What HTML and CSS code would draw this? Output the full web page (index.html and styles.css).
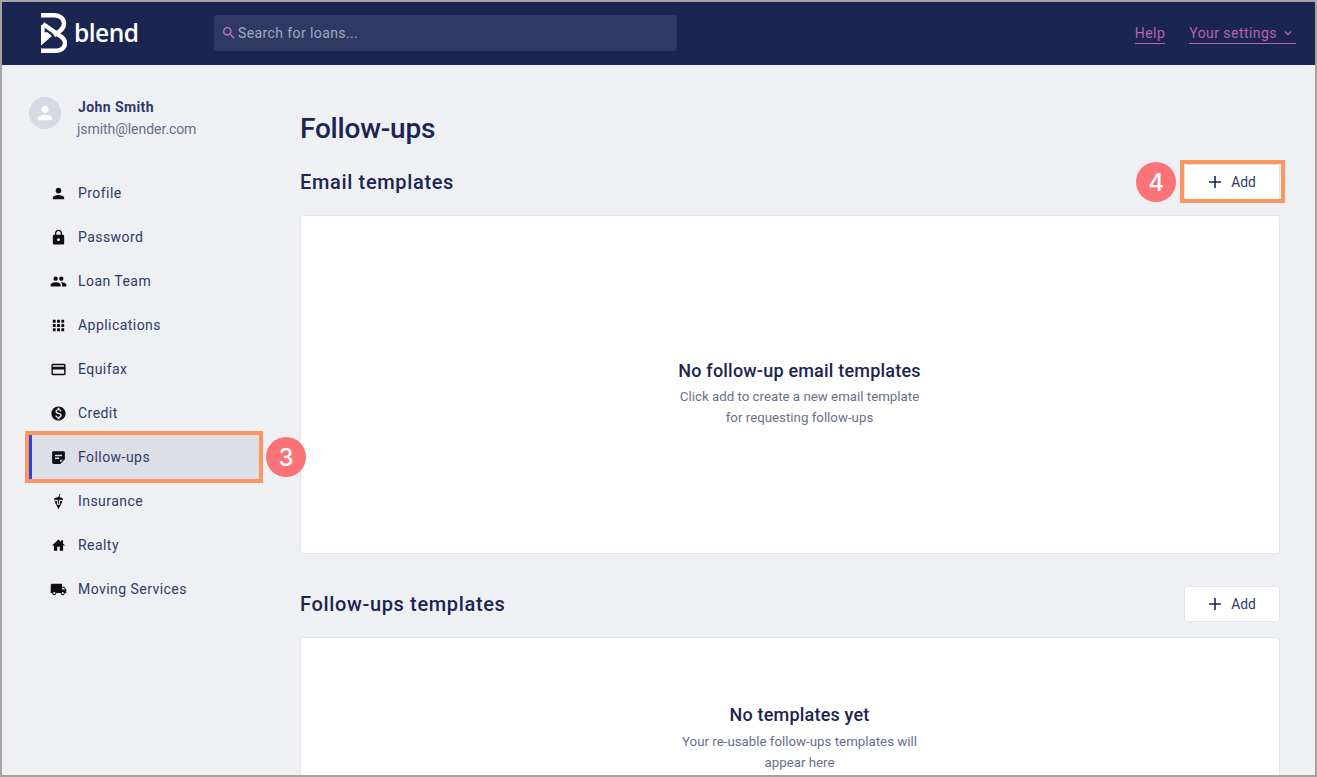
FILE: index.html
```html
<!DOCTYPE html>
<html lang="en">
<head>
    <meta charset="UTF-8">
    <meta name="viewport" content="width=device-width, initial-scale=1.0">
    <title>Follow-ups</title>
    <link rel="stylesheet" href="styles.css">
</head>
<body>

    <div class="frame">

        <header class="topbar">
            <div class="logo">
                <svg class="logo-mark" width="26" height="40" viewBox="0 0 26 40">
                    <path d="M0 2.200h13.500c5.500 0 9.500 3.500 9.500 8.300 0 3-1.500 5.500-3.800 7.200L13 22.500" fill="none" stroke="#fff" stroke-width="4.400"/>
                    <path d="M0 37.800h14.500c5.500 0 9.500-3.100 9.500-7.600 0-2.500-1.200-4.500-3-6L2 11" fill="none" stroke="#fff" stroke-width="4.400"/>
                    <path d="M0 11.500v21l11-9.500-4.500-3.700-2.800 0V15z" fill="#fff"/>
                </svg>
                <span class="logo-text">blend</span>
            </div>

            <div class="search">
                <svg class="search-icon" width="16" height="16" viewBox="0 0 24 24"><path d="M15.500 14h-.79l-.28-.27A6.470 6.470 0 0 0 16 9.500 6.500 6.500 0 1 0 9.500 16c1.610 0 3.090-.59 4.230-1.570l.27.28v.79l5 4.990L20.490 19l-4.990-5zm-6 0C7.010 14 5 11.990 5 9.500S7.010 5 9.500 5 14 7.010 14 9.500 11.990 14 9.500 14z"/></svg>
                <span>Search for loans...</span>
            </div>

            <nav class="toplinks">
                <a class="toplink">Help</a>
                <a class="toplink">Your settings
                    <svg class="chevron" width="12" height="12" viewBox="0 0 24 24"><path d="M6 9l6 6 6-6" fill="none" stroke-width="2.500"/></svg>
                </a>
            </nav>
        </header>

        <div class="content">

            <aside class="sidebar">
                <div class="user">
                    <div class="avatar">
                        <svg width="22" height="22" viewBox="0 0 24 24"><path d="M12 12c2.210 0 4-1.790 4-4s-1.790-4-4-4-4 1.790-4 4 1.790 4 4 4zm0 2c-2.670 0-8 1.340-8 4v2h16v-2c0-2.660-5.330-4-8-4z"/></svg>
                    </div>
                    <div class="user-info">
                        <div class="user-name">John Smith</div>
                        <div class="user-email">jsmith@lender.com</div>
                    </div>
                </div>

                <ul class="menu">
                    <li class="menu-item">
                        <svg class="menu-icon" viewBox="0 0 24 24"><path d="M12 12c2.210 0 4-1.790 4-4s-1.790-4-4-4-4 1.790-4 4 1.790 4 4 4zm0 2c-2.670 0-8 1.340-8 4v2h16v-2c0-2.660-5.330-4-8-4z"/></svg>
                        Profile
                    </li>
                    <li class="menu-item">
                        <svg class="menu-icon" viewBox="0 0 24 24"><path d="M18 8h-1V6c0-2.760-2.240-5-5-5S7 3.240 7 6v2H6c-1.100 0-2 .9-2 2v10c0 1.100.9 2 2 2h12c1.100 0 2-.9 2-2V10c0-1.100-.9-2-2-2zm-6 9c-1.100 0-2-.9-2-2s.9-2 2-2 2 .9 2 2-.9 2-2 2zm3.100-9H8.900V6c0-1.710 1.390-3.100 3.100-3.100 1.710 0 3.100 1.390 3.100 3.100v2z"/></svg>
                        Password
                    </li>
                    <li class="menu-item">
                        <svg class="menu-icon" viewBox="0 0 24 24"><path d="M16 11c1.660 0 2.990-1.340 2.990-3S17.660 5 16 5c-1.660 0-3 1.340-3 3s1.340 3 3 3zm-8 0c1.660 0 2.990-1.340 2.990-3S9.660 5 8 5C6.340 5 5 6.340 5 8s1.340 3 3 3zm0 2c-2.330 0-7 1.170-7 3.500V19h14v-2.500c0-2.330-4.670-3.500-7-3.500zm8 0c-.29 0-.62.02-.97.05 1.160.84 1.970 1.970 1.970 3.450V19h6v-2.500c0-2.330-4.670-3.500-7-3.500z"/></svg>
                        Loan Team
                    </li>
                    <li class="menu-item">
                        <svg class="menu-icon" viewBox="0 0 24 24"><path d="M4 8h4V4H4v4zm6 12h4v-4h-4v4zm-6 0h4v-4H4v4zm0-6h4v-4H4v4zm6 0h4v-4h-4v4zm6-10v4h4V4h-4zm-6 4h4V4h-4v4zm6 6h4v-4h-4v4zm0 6h4v-4h-4v4z"/></svg>
                        Applications
                    </li>
                    <li class="menu-item">
                        <svg class="menu-icon" viewBox="0 0 24 24"><path d="M20 4H4c-1.110 0-1.990.89-1.990 2L2 18c0 1.110.89 2 2 2h16c1.110 0 2-.89 2-2V6c0-1.110-.89-2-2-2zm0 14H4v-6h16v6zm0-10H4V6h16v2z"/></svg>
                        Equifax
                    </li>
                    <li class="menu-item">
                        <svg class="menu-icon" viewBox="0 0 24 24"><path d="M12 2C6.480 2 2 6.480 2 12s4.480 10 10 10 10-4.480 10-10S17.520 2 12 2zm1.410 16.090V20h-2.670v-1.930c-1.710-.36-3.160-1.460-3.270-3.400h1.960c.1 1.050.82 1.870 2.650 1.870 1.960 0 2.400-.98 2.400-1.590 0-.83-.44-1.610-2.670-2.140-2.480-.6-4.180-1.620-4.180-3.670 0-1.720 1.390-2.840 3.110-3.210V4h2.670v1.950c1.860.45 2.790 1.860 2.870 3.390H14.300c-.05-1.110-.64-1.870-2.220-1.870-1.500 0-2.400.68-2.400 1.640 0 .84.65 1.390 2.670 1.910s4.180 1.390 4.180 3.910c-.01 1.830-1.380 2.830-3.120 3.160z"/></svg>
                        Credit
                    </li>
                    <li class="menu-item menu-item-active">
                        <svg class="menu-icon" viewBox="0 0 24 24"><path fill-rule="evenodd" d="M5 3h14a2 2 0 0 1 2 2v9.500L14.500 21H5a2 2 0 0 1-2-2V5a2 2 0 0 1 2-2zm2 5v2.200h10V8H7zm0 4v2.200h6V12H7zm7.500 3v4l4-4h-4z"/></svg>
                        Follow-ups
                        <span class="callout callout-menu"></span>
                        <span class="badge badge-menu">3</span>
                    </li>
                    <li class="menu-item">
                        <svg class="menu-icon" viewBox="0 0 24 24"><path d="M12.800 2.500c0-1.200 1.900-1.400 2.200-.2l-1 .3c-.1-.2-.2-.1-.2.1V6c2 .3 3.300 1 4.200 1.800v2.700L15.500 9.200 14 10.300l-1.200-1V15h-1.600V9.300l-1.200 1-1.500-1.100L6 10.500V7.800C6.900 7 8.700 6.200 11.200 6V5h1.600V2.500zM6.500 12l2-1.100 1.400 1V16.500h4.200V11.900l1.400-1 2 1.100L12 23z"/></svg>
                        Insurance
                    </li>
                    <li class="menu-item">
                        <svg class="menu-icon" viewBox="-1 -1 26 26"><path d="M19 9.300V4h-3v2.600L12 3 2 12h3v8h5v-6h4v6h5v-8h3l-3-2.700z"/></svg>
                        Realty
                    </li>
                    <li class="menu-item">
                        <svg class="menu-icon" viewBox="0 0 24 24"><path d="M20 8h-3V4H3c-1.100 0-2 .9-2 2v11h2c0 1.660 1.340 3 3 3s3-1.340 3-3h6c0 1.660 1.340 3 3 3s3-1.340 3-3h2v-5l-3-4zM6 18.500c-.83 0-1.500-.67-1.500-1.500s.67-1.500 1.500-1.500 1.500.67 1.500 1.500-.67 1.500-1.500 1.500zm13.500-9l1.960 2.500H17V9.500h2.500zm-1.500 9c-.83 0-1.500-.67-1.500-1.500s.67-1.500 1.500-1.500 1.500.67 1.500 1.500-.67 1.500-1.500 1.500z"/></svg>
                        Moving Services
                    </li>
                </ul>
            </aside>

            <main class="main">
                <h1 class="page-title">Follow-ups</h1>

                <section class="section">
                    <div class="section-head">
                        <h2 class="section-title">Email templates</h2>
                        <button class="add-btn">
                            <svg class="plus" viewBox="0 0 14 14"><path d="M7 1v12M1 7h12" fill="none" stroke-width="1.600"/></svg>
                            Add
                            <span class="callout callout-add"></span>
                            <span class="badge badge-add">4</span>
                        </button>
                    </div>
                    <div class="card card-email">
                        <h3 class="card-title">No follow-up email templates</h3>
                        <p class="card-text">Click add to create a new email template<br>for requesting follow-ups</p>
                    </div>
                </section>

                <section class="section">
                    <div class="section-head">
                        <h2 class="section-title">Follow-ups templates</h2>
                        <button class="add-btn">
                            <svg class="plus" viewBox="0 0 14 14"><path d="M7 1v12M1 7h12" fill="none" stroke-width="1.600"/></svg>
                            Add
                        </button>
                    </div>
                    <div class="card card-followups">
                        <h3 class="card-title">No templates yet</h3>
                        <p class="card-text">Your re-usable follow-ups templates will<br>appear here</p>
                    </div>
                </section>
            </main>

        </div>
    </div>

</body>
</html>
```

FILE: styles.css
```css
:root {
    --navy: #1a2651;
    --text: #2f3b66;
    --muted: #676f8f;
    --pink: #b565a8;
    --orange: #fd9660;
    --coral: #fc7377;
    --line: #e3e5ec;
}

*, *::before, *::after {
    margin: 0;
    padding: 0;
    box-sizing: border-box;
}

html, body {
    height: 100%;
    overflow: hidden;
}

body {
    font-family: Roboto, "Liberation Sans", sans-serif;
    color: var(--navy);
}

.frame {
    width: 1317px;
    height: 777px;
    border: 2px solid #a5a5a5;
    background-color: #eef0f4;
    overflow: hidden;
}

/* top bar */
.topbar {
    height: 63px;
    background-color: var(--navy);
    display: flex;
    align-items: center;
    padding-left: 39px;
    padding-right: 19px;
    padding-bottom: 1px;
}

.logo {
    width: 173px;
    display: flex;
    align-items: center;
}

.logo-mark {
    display: block;
}

.logo-text {
    font-family: "Open Sans", sans-serif;
    font-size: 24.500px;
    font-weight: 600;
    color: #fff;
    margin-left: 7px;
    letter-spacing: -0.5px;
    line-height: 32px;
}

.search {
    width: 463px;
    height: 36px;
    background-color: #2e3a63;
    border-radius: 3px;
    display: flex;
    align-items: center;
    padding-left: 7px;
    gap: 1px;
    font-size: 14px;
    letter-spacing: 0.4px;
    color: #a3a9be;
}

.search-icon {
    fill: #d070bd;
}

.toplinks {
    margin-left: auto;
    display: flex;
    gap: 24px;
}

.toplink {
    font-size: 14px;
    letter-spacing: 0.45px;
    color: var(--pink);
    border-bottom: 1px solid var(--pink);
    height: 22px;
    padding-top: 1px;
    line-height: 19px;
    display: flex;
    align-items: center;
    gap: 5px;
    padding-right: 2px;
}

.toplink:first-child {
    padding-right: 0;
}

.chevron {
    stroke: var(--pink);
}

/* sidebar */
.content {
    display: flex;
}

.sidebar {
    width: 298px;
    flex-shrink: 0;
    padding-top: 32px;
    padding-left: 27px;
}

.user {
    display: flex;
    gap: 16px;
    height: 44px;
}

.avatar {
    width: 32px;
    height: 32px;
    border-radius: 50%;
    background-color: #d6d9e1;
    display: flex;
    justify-content: center;
    align-items: center;
}

.avatar svg {
    fill: #fff;
}

.user-name {
    font-size: 14px;
    font-weight: 700;
    letter-spacing: 0.4px;
    color: var(--text);
    line-height: 20px;
    padding-left: 1px;
}

.user-email {
    font-size: 14px;
    letter-spacing: -0.05px;
    color: var(--muted);
    line-height: 20px;
    margin-top: 2px;
}

.menu {
    list-style: none;
    margin-top: 30px;
    width: 233px;
}

.menu-item {
    position: relative;
    height: 44px;
    display: flex;
    align-items: center;
    gap: 11px;
    padding-left: 21px;
    font-size: 14px;
    letter-spacing: 0.45px;
    color: var(--text);
}

.menu-icon {
    width: 17px;
    height: 17px;
    fill: #0d0d12;
}

.menu-item-active {
    background-color: #dcdfe6;
    border-left: 3px solid #2a45d8;
    padding-left: 18px;
}

/* annotations painted over the screenshot */
.callout {
    position: absolute;
    border: 4px solid var(--orange);
    pointer-events: none;
}

.callout-menu {
    left: -7px;
    top: -4px;
    width: 238px;
    height: 52px;
}

.callout-add {
    left: -5px;
    top: -5px;
    width: 105px;
    height: 43px;
}

.badge {
    position: absolute;
    width: 40px;
    height: 40px;
    border-radius: 50%;
    background-color: var(--coral);
    color: #fff;
    font-size: 24px;
    font-weight: 500;
    font-family: Inter, Roboto, sans-serif;
    display: flex;
    justify-content: center;
    align-items: center;
    letter-spacing: 0;
}

.badge-menu {
    left: 234px;
    top: 2px;
}

.badge-add {
    left: -49px;
    top: -3px;
}

/* main column */
.main {
    width: 980px;
}

.page-title {
    font-size: 28px;
    font-weight: 500;
    letter-spacing: -0.2px;
    line-height: 36px;
    margin-top: 46px;
}

.section-head {
    display: flex;
    justify-content: space-between;
    align-items: center;
    height: 36px;
}

.section-title {
    font-size: 20px;
    font-weight: 500;
    letter-spacing: 0.65px;
}

.section {
    margin-top: 17px;
}

.section + .section {
    margin-top: 32px;
}

.add-btn {
    position: relative;
    width: 96px;
    height: 36px;
    background-color: #fff;
    border: 1px solid var(--line);
    border-radius: 3px;
    font-family: Roboto, sans-serif;
    font-size: 13.800px;
    color: var(--text);
    display: flex;
    justify-content: center;
    align-items: center;
    gap: 9px;
}

.plus {
    width: 14px;
    height: 14px;
    stroke: var(--navy);
}

.card {
    margin-top: 15px;
    background-color: #fff;
    border: 1px solid var(--line);
    border-radius: 3px;
    text-align: center;
    padding-left: 19px;
}

.card-email {
    height: 339px;
    padding-top: 143px;
}

.card-followups {
    height: 300px;
    padding-top: 65px;
}

.card-title {
    font-size: 18px;
    font-weight: 500;
    letter-spacing: 0.2px;
    line-height: 24px;
}

.card-text {
    font-size: 13.300px;
    line-height: 21px;
    color: var(--muted);
    margin-top: 3px;
}

.card-followups .card-text {
    margin-top: 4px;
}
```
